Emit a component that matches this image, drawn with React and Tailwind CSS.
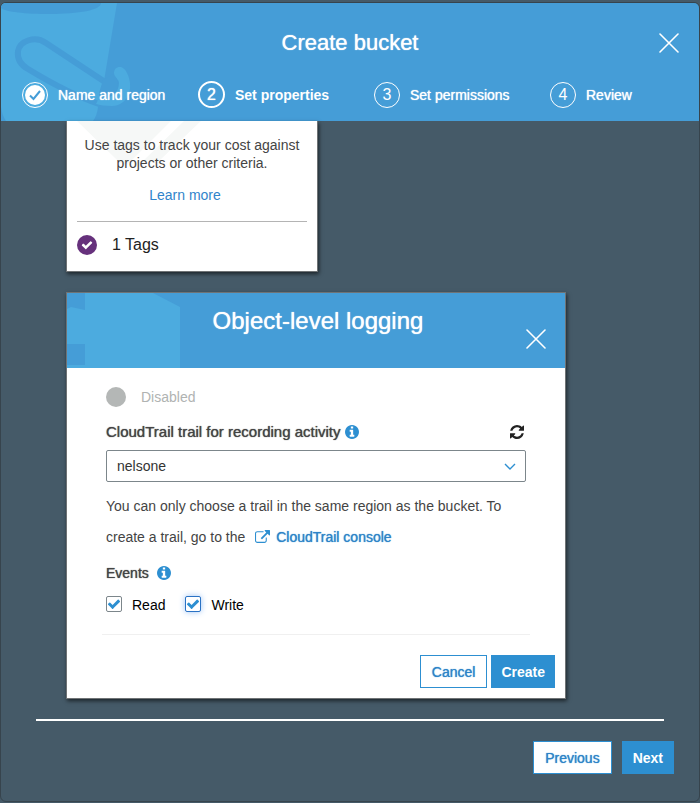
import { useState } from "react";

const INFO_PATH =
  "M1152 1376v-160q0-14-9-23t-23-9h-96v-512q0-14-9-23t-23-9h-320q-14 0-23 9t-9 23v160q0 14 9 23t23 9h96v320h-96q-14 0-23 9t-9 23v160q0 14 9 23t23 9h448q14 0 23-9t9-23zm-128-896v-160q0-14-9-23t-23-9h-192q-14 0-23 9t-9 23v160q0 14 9 23t23 9h192q14 0 23-9t9-23zm640 416q0 209-103 385.5t-279.5 279.5-385.5 103-385.5-103-279.5-279.5-103-385.5 103-385.5 279.5-279.5 385.5-103 385.5 103 279.5 279.5 103 385.5z";
const CHECK_PATH =
  "M1671 566q0 40-28 68l-724 724-136 136q-28 28-68 28t-68-28l-136-136-362-362q-28-28-28-68t28-68l136-136q28-28 68-28t68 28l294 295 656-657q28-28 68-28t68 28l136 136q28 28 28 68z";
const REFRESH_PATH =
  "M1511 928q0 5-1 7-64 268-268 434.5T764 1536q-146 0-282.5-55T238 1324l-129 129q-19 19-45 19t-45-19-19-45V960q0-26 19-45t45-19h448q26 0 45 19t19 45-19 45l-137 137q71 66 161 102t187 36q134 0 250-65t186-179q11-17 53-117 8-23 30-23h192q13 0 22.5 9.5t9.5 22.5zm25-800v448q0 26-19 45t-45 19h-448q-26 0-45-19t-19-45 19-45l138-138Q969 256 768 256q-134 0-250 65T332 500q-11 17-53 117-8 23-30 23H50q-13 0-22.5-9.5T18 608v-7q65-268 270-434.5T768 0q146 0 284 55.5T1297 212l130-129q19-19 45-19t45 19 19 45z";
const EXTERNAL_PATH =
  "M1408 928v320q0 119-84.5 203.5t-203.5 84.5h-832q-119 0-203.5-84.5t-84.5-203.5v-832q0-119 84.5-203.5t203.5-84.5h704q14 0 23 9t9 23v64q0 14-9 23t-23 9h-704q-66 0-113 47t-47 113v832q0 66 47 113t113 47h832q66 0 113-47t47-113v-320q0-14 9-23t23-9h64q14 0 23 9t9 23zm384-864v512q0 26-19 45t-45 19-45-19l-176-176-652 652q-10 10-23 10t-23-10l-114-114q-10-10-10-23t10-23l652-652-176-176q-19-19-19-45t19-45 45-19h512q26 0 45 19t19 45z";

function InfoIcon() {
  return (
    <svg viewBox="128 128 1536 1536" className="size-[14px] fill-[#2d8fd1]" aria-hidden="true">
      <path d={INFO_PATH} />
    </svg>
  );
}

function CloseButton({ label }) {
  return (
    <button type="button" aria-label={label} className="block size-5">
      <svg viewBox="0 0 20 20" className="size-5 stroke-white" strokeWidth="1.6" strokeLinecap="round" aria-hidden="true">
        <path d="M1 1 19 19M19 1 1 19" />
      </svg>
    </button>
  );
}

function BucketArt() {
  return (
    <svg viewBox="0 0 140 118" className="absolute left-0 top-0 h-[118px] w-[140px]" aria-hidden="true">
      <path d="M0 0H116L103 78L97 104Q96 113 92 118H5Q1 112 0 104Z" fill="#4cabdf" />
      <path d="M0 0H100C100 7 78 11 49 11C24 11 5 9 0 5Z" fill="#459dd7" />
      <path d="M104 79 45 40C34 32 19 38 17 48C16 56 20 62 27 66C50 80 74 93 98 101" fill="none" stroke="#459dd7" strokeWidth="6" />
      <path d="M102 77 112 71C121 80 117 92 106 95L98 100V90Z" fill="#459dd7" />
      <path d="M113 70C113 63 122 61 126 70C134 86 126 103 111 103C104 103 99 102 95 101L98 95C109 97 118 90 118 80C118 76 113 74 113 70Z" fill="#4cabdf" />
    </svg>
  );
}

function StepMark({ number, state }) {
  if (state === "done") {
    return (
      <span className="flex size-[26px] items-center justify-center rounded-full border border-white">
        <span className="flex size-5 items-center justify-center rounded-full bg-white">
          <svg viewBox="0 0 12 12" className="size-3 fill-none stroke-[#459dd7]" strokeWidth="2" aria-hidden="true">
            <path d="M1 6.5 4.5 10 11 2" />
          </svg>
        </span>
      </span>
    );
  }
  if (state === "current") {
    return (
      <span className="flex size-[27px] items-center justify-center rounded-full border-2 border-white text-base [text-shadow:0_0_1px_#fff]">
        {number}
      </span>
    );
  }
  return (
    <span className="flex size-[26px] items-center justify-center rounded-full border border-white text-base">
      {number}
    </span>
  );
}

const STEPS = [
  { label: "Name and region", state: "done" },
  { label: "Set properties", state: "current" },
  { label: "Set permissions", state: "next" },
  { label: "Review", state: "next" },
];

function CheckOption({ label, checked, onChange, focused }) {
  return (
    <label className="flex items-start gap-[10px] text-sm leading-5 text-black">
      <span className="relative mt-px block size-4">
        <input
          type="checkbox"
          checked={checked}
          onChange={onChange}
          className={
            focused
              ? "block size-4 appearance-none rounded-[2px] border border-[#2a72c4] bg-white shadow-[0_0_6px_#9cc4f5]"
              : "block size-4 appearance-none rounded-[2px] border border-[#7c868b] bg-white"
          }
        />
        {checked && (
          <svg viewBox="0 0 1792 1792" className="pointer-events-none absolute left-px top-px size-[14px] fill-[#2d8fd1]" aria-hidden="true">
            <path d={CHECK_PATH} />
          </svg>
        )}
      </span>
      {label}
    </label>
  );
}

function TagsCard() {
  return (
    <section className="relative w-[252px] border border-t-0 border-[#6f7375] bg-white px-[10px] pb-4 pt-[15px] shadow-[1px_2px_4px_rgba(0,0,0,0.6)]">
      <svg viewBox="0 0 140 46" className="absolute left-0 top-0 h-[46px] w-[140px] fill-[#f6f8f7]" aria-hidden="true">
        <path d="M10 0H104L60 44C55 43 52 41 48 37Z" />
        <path d="M117 0H134L92 40H76Z" />
      </svg>
      <p className="relative text-center text-sm leading-[18px] text-[#444]">
        Use tags to track your cost against
        <br />
        projects or other criteria.
      </p>
      <div className="relative mt-[13px] pr-[14px] text-center text-sm leading-5">
        <a href="#learn-more" className="text-[#3184cb]">Learn more</a>
      </div>
      <hr className="mt-4 border-[#b4b4b4]" />
      <div className="mt-[13px] flex items-center gap-[15px]">
        <span className="flex size-5 items-center justify-center rounded-full bg-[#66317c]">
          <svg viewBox="0 0 1792 1792" className="size-3 fill-white" aria-hidden="true">
            <path d={CHECK_PATH} />
          </svg>
        </span>
        <span className="text-base leading-5 text-[#222]">1 Tags</span>
      </div>
    </section>
  );
}

function LoggingCard() {
  const [read, setRead] = useState(true);
  const [write, setWrite] = useState(true);
  return (
    <section className="mt-5 w-[500px] border border-[#6f7375] bg-white shadow-[1px_2px_4px_rgba(0,0,0,0.6)]">
      <header className="relative h-[75px] bg-[#459dd7] pt-3">
        <svg viewBox="0 0 114 75" className="absolute left-0 top-0 h-[75px] w-[114px] fill-[#4cabdf]" aria-hidden="true">
          <path d="M18 0H86L113 14V75H0V72H18V51H0V16L4 14L18 17Z" />
        </svg>
        <h2 className="relative pl-1 text-center text-2xl leading-8 text-white [text-shadow:0_0_1px_#fff]">
          Object-level logging
        </h2>
        <div className="absolute right-[19px] top-9">
          <CloseButton label="Close object-level logging" />
        </div>
      </header>

      <div className="px-[39px] pt-[19px]">
        <div className="flex items-center gap-[15px]">
          <span className="size-5 rounded-full bg-[#b4b7b6]" />
          <span className="text-sm leading-5 text-[#b0b3b2]">Disabled</span>
        </div>

        <div className="mt-[15px] flex h-5 items-center">
          <label htmlFor="trail" className="text-[15px] leading-5 text-[#444] [text-shadow:0_0_1px_#444]">
            CloudTrail trail for recording activity
          </label>
          <span className="ml-1"><InfoIcon /></span>
          <button type="button" aria-label="Refresh trails" className="ml-auto mr-[2px]">
            <svg viewBox="0 0 1536 1536" className="size-[14px] fill-[#222]" aria-hidden="true">
              <path d={REFRESH_PATH} />
            </svg>
          </button>
        </div>

        <div className="relative mt-2">
          <select
            id="trail"
            className="block h-8 w-full appearance-none rounded-[2px] border border-[#7c868b] bg-white pl-[10px] pr-8 text-sm text-[#333]"
          >
            <option>nelsone</option>
          </select>
          <svg viewBox="0 0 12 8" className="pointer-events-none absolute right-[10px] top-[13px] h-2 w-3 fill-none stroke-[#2d8fd1]" strokeWidth="1.4" aria-hidden="true">
            <path d="M1 1 6 6 11 1" />
          </svg>
        </div>

        <p className="mt-[9px] text-sm leading-[31px] text-[#444]">
          <span>You can only choose a trail in the same region as the bucket. To</span>{" "}
          <span className="whitespace-nowrap">create a trail, go to the</span>{" "}
          <a href="#cloudtrail" className="ml-[6px] whitespace-nowrap text-[#2d84c8] [text-shadow:0_0_1px_#2d84c8]">
            <svg viewBox="0 0 1792 1536" className="mr-[6px] inline h-[13px] w-[15px] fill-[#2d8fd1] align-[-1px]" aria-hidden="true">
              <path d={EXTERNAL_PATH} />
            </svg>
            CloudTrail console
          </a>
        </p>

        <fieldset className="mt-[10px]">
          <legend className="flex h-5 items-center gap-2 text-sm leading-5 text-[#444] [text-shadow:0_0_1px_#444]">
            Events <InfoIcon />
          </legend>
          <div className="flex gap-5 pt-3">
            <CheckOption label="Read" checked={read} onChange={() => setRead(!read)} />
            <CheckOption label="Write" checked={write} onChange={() => setWrite(!write)} focused />
          </div>
        </fieldset>

        <hr className="-mx-1 mt-[19px] border-[#f0f0f0]" />
      </div>

      <div className="mt-5 flex justify-end gap-1 px-[10px] pb-[10px]">
        <button type="button" className="h-[33px] border border-[#2d8fd1] bg-white px-[11px] text-sm text-[#2d84c8] [text-shadow:0_0_1px_#2d84c8]">
          Cancel
        </button>
        <button type="button" className="h-[33px] bg-[#2d8fd1] px-[10px] text-sm font-bold text-white">Create</button>
      </div>
    </section>
  );
}

export default function App() {
  return (
    <div className="min-h-screen bg-[#455a68] pb-px pt-[2px] font-['Liberation_Sans',Arial,sans-serif]">
      <main className="flex min-h-[calc(100vh-3px)] flex-col overflow-hidden rounded-md border border-[#37444d] bg-[#455a68]">
        <header className="relative h-[118px] bg-[#459dd7] text-white">
          <BucketArt />
          <h1 className="relative pt-6 text-center text-[22px] leading-8 [text-shadow:0_0_1px_#fff]">Create bucket</h1>
          <div className="absolute right-5 top-[30px]">
            <CloseButton label="Close create bucket" />
          </div>
          <ol className="relative mt-[22px] flex pl-[21px]">
            {STEPS.map((step, i) => (
              <li key={step.label} className="flex h-[27px] w-44 shrink-0 items-center gap-[10px] last:w-auto">
                <StepMark number={i + 1} state={step.state} />
                <span className={step.state === "current" ? "text-sm font-bold" : "text-sm [text-shadow:0_0_1px_#fff]"}>
                  {step.label}
                </span>
              </li>
            ))}
          </ol>
        </header>

        <div className="pl-[65px]">
          <TagsCard />
          <LoggingCard />
        </div>

        <footer className="mx-[35px] mt-5 border-t-2 border-white pt-5">
          <div className="-mr-[10px] flex justify-end gap-[10px]">
            <button type="button" className="h-[33px] border border-[#2d8fd1] bg-white px-[11px] text-sm text-[#2d84c8] [text-shadow:0_0_1px_#2d84c8]">
              Previous
            </button>
            <button type="button" className="h-[33px] bg-[#2d8fd1] px-[11px] text-sm font-bold text-white">Next</button>
          </div>
        </footer>
      </main>
    </div>
  );
}
